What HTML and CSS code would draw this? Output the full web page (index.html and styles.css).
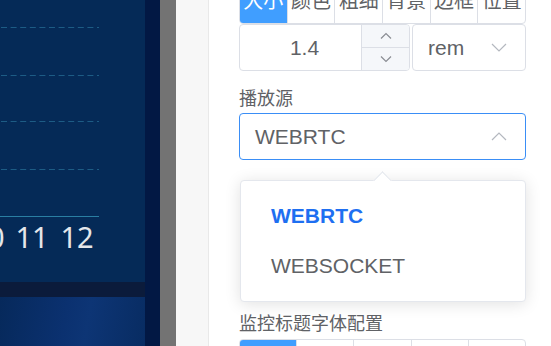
FILE: index.html
```html
<!DOCTYPE html>
<html lang="zh-CN">
<head>
    <meta charset="UTF-8">
    <title>监控配置</title>
    <link rel="stylesheet" href="styles.css">
</head>
<body>
    <div class="screen">
        <div class="dash">
            <div class="chart-card">
                <svg class="chart" width="145" height="282" viewBox="0 0 145 282">
                    <g class="grid">
                        <line x1="1" y1="27.5" x2="99" y2="27.5"/>
                        <line x1="1" y1="75.5" x2="99" y2="75.5"/>
                        <line x1="1" y1="121.5" x2="99" y2="121.5"/>
                        <line x1="1" y1="169.5" x2="99" y2="169.5"/>
                    </g>
                    <line class="axis" x1="0" y1="216.5" x2="99" y2="216.5"/>
                    <g class="ticks">
                        <text x="-12" y="248">10</text>
                        <text x="32" y="248">11</text>
                        <text x="77" y="248">12</text>
                    </g>
                </svg>
            </div>
            <div class="band"></div>
            <div class="video-card"></div>
        </div>
        <div class="edge"></div>
        <div class="mask"></div>
    </div>

    <div class="drawer">
        <div class="drawer-side"></div>
        <div class="drawer-body">
            <div class="seg seg-top">
                <span class="active">大小</span>
                <span>颜色</span>
                <span>粗细</span>
                <span>背景</span>
                <span>边框</span>
                <span>位置</span>
            </div>

            <div class="num-row">
                <div class="input-number">
                    <div class="num-value">1.4</div>
                    <div class="num-ctrl">
                        <span class="num-btn">
                            <svg width="12" height="8" viewBox="0 0 12 8"><path d="M1 6.5 L6 1.5 L11 6.5"/></svg>
                        </span>
                        <span class="num-btn">
                            <svg width="12" height="8" viewBox="0 0 12 8"><path d="M1 1.5 L6 6.5 L11 1.5"/></svg>
                        </span>
                    </div>
                </div>
                <div class="select select-unit">
                    <span>rem</span>
                    <svg class="caret" width="16" height="9" viewBox="0 0 16 9"><path d="M1 1 L8 8 L15 1"/></svg>
                </div>
            </div>

            <div class="field-label">播放源</div>
            <div class="select-wrap">
                <div class="select is-focus">
                    <span>WEBRTC</span>
                    <svg class="caret" width="16" height="9" viewBox="0 0 16 9"><path d="M1 8 L8 1 L15 8"/></svg>
                </div>
                <div class="popper">
                    <div class="popper-arrow"></div>
                    <ul class="options">
                        <li class="selected">WEBRTC</li>
                        <li>WEBSOCKET</li>
                    </ul>
                </div>
            </div>

            <div class="field-label title-label">监控标题字体配置</div>
            <div class="seg seg-bottom">
                <span class="active"></span>
                <span></span>
                <span></span>
                <span></span>
                <span></span>
            </div>
        </div>
    </div>
</body>
</html>
```

FILE: styles.css
```css
body {
    margin: 0;
    display: flex;
    height: 346px;
    overflow: hidden;
    font-family: 'Liberation Sans', 'Noto Sans CJK SC', sans-serif;
    color: #606266;
    background: #fff;
}

/* left: dashboard behind the mask */
.screen {
    display: flex;
    width: 176px;
    flex: none;
}

.dash {
    width: 145px;
    display: flex;
    flex-direction: column;
}

.chart-card {
    height: 282px;
    background-color: #052a57;
}

.chart {
    display: block;
}

.grid line {
    stroke: #1d5c85;
    stroke-width: 1;
    stroke-dasharray: 6 3.6;
}

.axis {
    stroke: #2a7ea2;
    stroke-width: 1;
}

.ticks text {
    font-family: 'Noto Sans', sans-serif;
    font-size: 29px;
    fill: #e4e6ea;
    text-anchor: middle;
}

.band {
    height: 15px;
    background-color: #0b1b3b;
}

.video-card {
    flex: 1;
    background: linear-gradient(100deg, #06295b 0%, #0b3170 45%, #0d3575 60%, #082c62 100%);
}

.edge {
    width: 15px;
    background-color: #021844;
}

.mask {
    width: 16px;
    background-color: #737373;
}

/* right: config drawer */
.drawer {
    flex: 1;
    display: flex;
}

.drawer-side {
    width: 32px;
    background-color: #f7f7f7;
    border-right: 1px solid #e9e9e9;
}

.drawer-body {
    width: 287px;
    padding-left: 30px;
    position: relative;
}

.seg {
    display: flex;
    border: 1px solid #dcdfe6;
    border-radius: 4px;
    overflow: hidden;
    box-sizing: border-box;
}

.seg span {
    flex: 1;
    text-align: center;
    border-left: 1px solid #dcdfe6;
    font-size: 20px;
    color: #606266;
}

.seg span:first-child {
    border-left: none;
}

.seg span.active {
    background-color: #409eff;
    color: #fff;
}

.seg-top {
    margin-top: -12px;
    height: 36px;
}

.seg-top span {
    line-height: 22px;
    padding-top: 1px;
}

.num-row {
    display: flex;
    gap: 2px;
    height: 47px;
}

.input-number {
    width: 171px;
    display: flex;
    border: 1px solid #dcdfe6;
    border-radius: 4px;
    box-sizing: border-box;
    overflow: hidden;
}

.num-value {
    flex: 1;
    text-align: center;
    line-height: 45px;
    font-size: 21px;
    padding-left: 8px;
}

.num-ctrl {
    width: 47px;
    display: flex;
    flex-direction: column;
    background-color: #f5f7fa;
    border-left: 1px solid #dcdfe6;
}

.num-btn {
    flex: 1;
    display: flex;
    align-items: center;
    justify-content: center;
}

.num-btn + .num-btn {
    border-top: 1px solid #dcdfe6;
}

.num-btn path {
    fill: none;
    stroke: #8a8d93;
    stroke-width: 1.2;
}

.select {
    display: flex;
    align-items: center;
    justify-content: space-between;
    border: 1px solid #dcdfe6;
    border-radius: 4px;
    box-sizing: border-box;
    font-size: 21px;
}

.select-unit {
    flex: 1;
    padding: 0 18px 0 15px;
}

.caret path {
    fill: none;
    stroke: #b4b8bf;
    stroke-width: 1.2;
}

.field-label {
    font-size: 18px;
    line-height: 22px;
    margin-top: 17px;
    margin-bottom: 3px;
}

.select-wrap {
    position: relative;
}

.select.is-focus {
    height: 47px;
    padding: 0 18px 0 15px;
    border-color: #3a8ef6;
}

/* dropdown over the form */
.popper {
    position: absolute;
    left: 1px;
    top: calc(100% + 20px);
    width: 286px;
    box-sizing: border-box;
    background-color: #fff;
    border: 1px solid #e4e7ed;
    border-radius: 4px;
    box-shadow: 0 2px 16px rgba(0, 0, 0, 0.12);
    z-index: 2;
}

.popper-arrow {
    position: absolute;
    left: 135px;
    top: -7px;
    width: 12px;
    height: 12px;
    background-color: #fff;
    border-top: 1px solid #e4e7ed;
    border-left: 1px solid #e4e7ed;
    transform: rotate(45deg);
}

.options {
    list-style: none;
    margin: 0;
    padding: 10px 0;
}

.options li {
    height: 50px;
    line-height: 50px;
    padding-left: 30px;
    font-size: 21px;
    color: #606266;
}

.options li.selected {
    color: #1e6ff1;
    font-weight: bold;
}

.title-label {
    margin-top: 153px;
    margin-bottom: 4px;
}

.seg-bottom {
    height: 40px;
}
```
